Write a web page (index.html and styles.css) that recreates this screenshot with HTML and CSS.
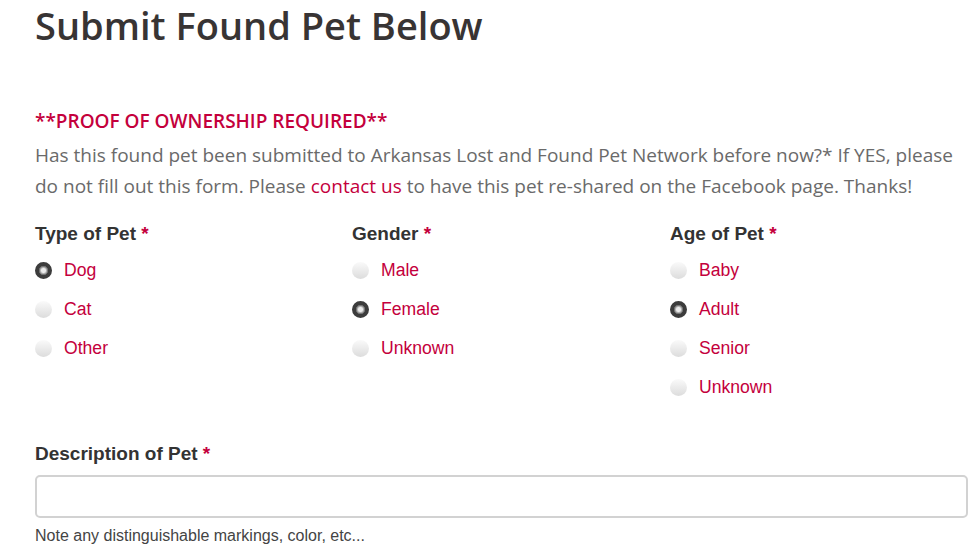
FILE: index.html
```html
<!DOCTYPE html>
<html>
<head>
<meta charset="utf-8">
<link rel="stylesheet" href="styles.css">
</head>
<body>
<div class="page">
  <h1 class="title">Submit Found Pet Below</h1>
  <p class="proof">**PROOF OF OWNERSHIP REQUIRED**</p>
  <p class="intro">Has this found pet been submitted to Arkansas Lost and Found Pet Network before now?* If YES, please do not fill out this form. Please <a class="link" href="#">contact us</a> to have this pet re-shared on the Facebook page. Thanks!</p>
  <div class="groups">
    <div class="group">
      <div class="label">Type of Pet <span class="req">*</span></div>
      <div class="option"><span class="radio on"></span><span class="opt">Dog</span></div>
      <div class="option"><span class="radio"></span><span class="opt">Cat</span></div>
      <div class="option"><span class="radio"></span><span class="opt">Other</span></div>
    </div>
    <div class="group">
      <div class="label">Gender <span class="req">*</span></div>
      <div class="option"><span class="radio"></span><span class="opt">Male</span></div>
      <div class="option"><span class="radio on"></span><span class="opt">Female</span></div>
      <div class="option"><span class="radio"></span><span class="opt">Unknown</span></div>
    </div>
    <div class="group">
      <div class="label">Age of Pet <span class="req">*</span></div>
      <div class="option"><span class="radio"></span><span class="opt">Baby</span></div>
      <div class="option"><span class="radio on"></span><span class="opt">Adult</span></div>
      <div class="option"><span class="radio"></span><span class="opt">Senior</span></div>
      <div class="option"><span class="radio"></span><span class="opt">Unknown</span></div>
    </div>
  </div>
  <div class="field">
    <div class="label">Description of Pet <span class="req">*</span></div>
    <div class="input"></div>
    <div class="note">Note any distinguishable markings, color, etc...</div>
  </div>
</div>
</body>
</html>
```
FILE: styles.css
```css
html, body { margin: 0; padding: 0; background: #fff; }
.page { padding: 0 12px 0 35px; }
.title {
  margin: 0;
  font-family: "Open Sans", sans-serif;
  font-weight: 600;
  font-size: 38px;
  line-height: 50px;
  color: #383434;
}
.proof {
  margin: 59px 0 0;
  font-family: "Open Sans", sans-serif;
  font-weight: 600;
  font-size: 19px;
  line-height: 24px;
  color: #c4003c;
}
.intro {
  margin: 7px 0 0;
  font-family: "Open Sans", sans-serif;
  font-size: 19px;
  line-height: 31px;
  color: #6a6a6a;
}
.link { color: #c4003c; text-decoration: none; }
.groups {
  display: grid;
  grid-template-columns: 317px 318px 1fr;
  margin-top: 21px;
}
.label {
  font-family: "Liberation Sans", Arial, sans-serif;
  font-weight: bold;
  font-size: 19px;
  line-height: 22px;
  color: #333;
}
.req { color: #c4003c; }
.group .label { margin-bottom: 6px; }
.option {
  display: flex;
  align-items: center;
  height: 39px;
}
.radio {
  width: 17px;
  height: 17px;
  border-radius: 50%;
  box-sizing: border-box;
  background: linear-gradient(#fafafa, #dcdcdc);
  margin-right: 12px;
}
.radio.on {
  border: 4px solid #3c3c3c;
  background: radial-gradient(circle, #ececec 0 2px, #b8b8b8 3px);
  box-shadow: inset 0 0 0 1px #777;
}
.opt {
  font-family: "Liberation Sans", Arial, sans-serif;
  font-size: 17.6px;
  color: #c4003c;
}
.field { margin-top: 36px; }
.field .label { margin-bottom: 10px; }
.input {
  height: 43px;
  box-sizing: border-box;
  border: 2px solid #d2d2d2;
  border-radius: 5px;
}
.note {
  margin-top: 9px;
  font-family: "Liberation Sans", Arial, sans-serif;
  font-size: 16px;
  color: #444;
}
```
